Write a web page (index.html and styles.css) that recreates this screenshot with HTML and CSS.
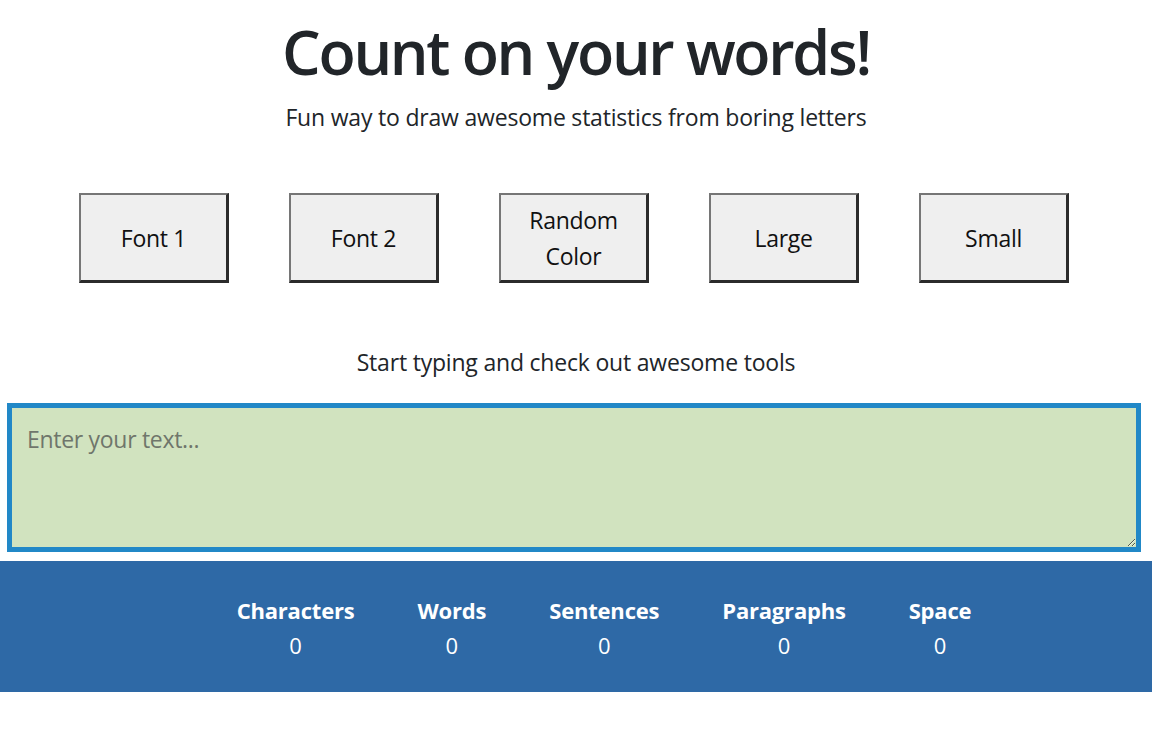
FILE: index.html
```html
<!DOCTYPE html>
<html lang="en">
<head>
<meta charset="utf-8">
<title>Count on your words!</title>
<link rel="stylesheet" href="styles.css">
</head>
<body>
<header class="hero">
  <h1 class="title">Count on your words!</h1>
  <p class="subtitle">Fun way to draw awesome statistics from boring letters</p>
</header>
<div class="tools">
  <button class="tool-btn">Font 1</button>
  <button class="tool-btn">Font 2</button>
  <button class="tool-btn">Random Color</button>
  <button class="tool-btn">Large</button>
  <button class="tool-btn">Small</button>
</div>
<p class="hint">Start typing and check out awesome tools</p>
<textarea class="editor" placeholder="Enter your text..."></textarea>
<section class="stats">
  <ul class="stats-list">
    <li class="stat"><span class="stat-label">Characters</span><span class="stat-value">0</span></li>
    <li class="stat"><span class="stat-label">Words</span><span class="stat-value">0</span></li>
    <li class="stat"><span class="stat-label">Sentences</span><span class="stat-value">0</span></li>
    <li class="stat"><span class="stat-label">Paragraphs</span><span class="stat-value">0</span></li>
    <li class="stat"><span class="stat-label">Space</span><span class="stat-value">0</span></li>
  </ul>
</section>
</body>
</html>
```

FILE: styles.css
```css
* { box-sizing: border-box; }
html, body { margin: 0; padding: 0; background: #fff; }
body {
  font-family: "Open Sans", "Noto Sans", sans-serif;
  color: #212529;
}
.hero {
  text-align: center;
  padding-top: 14px;
}
.title {
  margin: 0;
  font-size: 61px;
  font-weight: 600;
  line-height: 76px;
  letter-spacing: -2.3px;
}
.subtitle {
  margin: 11px 0 0;
  font-size: 23px;
  line-height: 32px;
  letter-spacing: -0.2px;
}
.tools {
  display: flex;
  justify-content: center;
  gap: 60px;
  margin-top: 60px;
  padding-right: 4px;
}
.tool-btn {
  width: 150px;
  height: 90px;
  background: #efefef;
  border-style: solid;
  border-width: 2px 3px 3px 2px;
  border-color: #767676 #2b2b2b #2b2b2b #767676;
  font-family: inherit;
  font-size: 23px;
  line-height: 36px;
  letter-spacing: -0.3px;
  color: #111;
  padding: 0 14px;
}
.hint {
  text-align: center;
  margin: 64px 0 0;
  font-size: 23px;
  line-height: 30px;
  letter-spacing: -0.2px;
}
.editor {
  display: block;
  margin: 26px 0 0 7px;
  width: 1134px;
  height: 149px;
  background: #d1e3bf;
  border: 5px solid #2188c7;
  outline: none;
  padding: 15px 15px;
  font-family: inherit;
  font-size: 23px;
  letter-spacing: -0.3px;
  color: #212529;
}
.editor::placeholder { color: #6f766b; }
.stats {
  margin-top: 9px;
  background: #2e69a6;
  height: 131px;
  color: #fff;
}
.stats-list {
  list-style: none;
  margin: 0;
  padding: 33px 0 0 56px;
  display: flex;
  justify-content: center;
  gap: 63px;
}
.stat {
  display: flex;
  flex-direction: column;
  align-items: center;
}
.stat-label {
  font-size: 22px;
  font-weight: 700;
  line-height: 32px;
  letter-spacing: -0.2px;
}
.stat-value {
  font-size: 22px;
  line-height: 39px;
}
```
